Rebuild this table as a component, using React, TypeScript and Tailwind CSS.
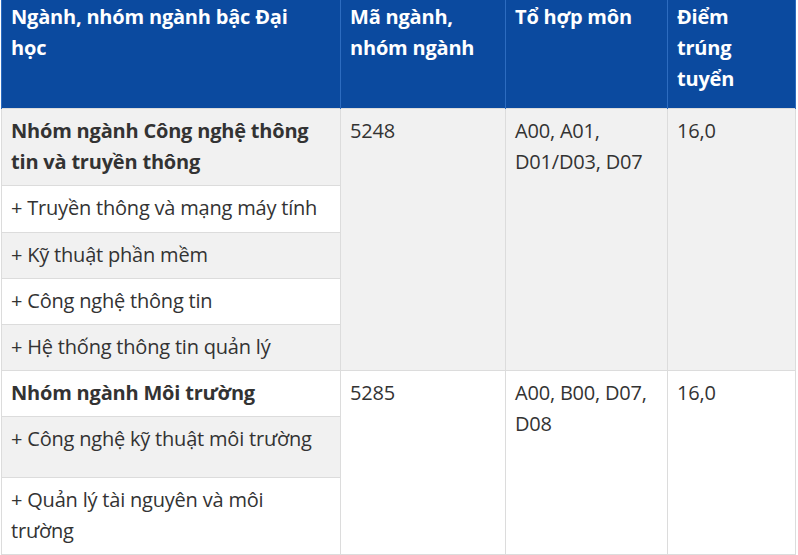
export default function App() {
  const cell = 'border border-[#dcdcdc] px-[9px] pt-[6px] pb-[7px] align-top';
  const head = 'border-x border-[#2d6cc0] px-[9px] pt-[1px] align-top text-left font-bold';
  return (
    <div className="w-[798px] h-[555px] bg-white overflow-hidden font-['Open_Sans',sans-serif] text-[20px] leading-[31px] text-[#333] tracking-[-0.2px]">
      <table className="table-fixed border-collapse w-[794px] ml-px">
        <colgroup>
          <col className="w-[339px]" />
          <col className="w-[165px]" />
          <col className="w-[162px]" />
          <col className="w-[128px]" />
        </colgroup>
        <thead>
          <tr className="h-[108px] bg-[#0b4a9f] text-white">
            <th className={head + ' pr-[40px]'}>Ngành, nhóm ngành bậc Đại học</th>
            <th className={head}>Mã ngành, nhóm ngành</th>
            <th className={head}>Tổ hợp môn</th>
            <th className={head}>Điểm trúng tuyển</th>
          </tr>
        </thead>
        <tbody>
          <tr className="h-[77px] bg-[#f1f1f1]">
            <td className={cell + ' font-bold'}>Nhóm ngành Công nghệ thông tin và truyền thông</td>
            <td className={cell} rowSpan={5}>5248</td>
            <td className={cell} rowSpan={5}>A00, A01, D01/D03, D07</td>
            <td className={cell} rowSpan={5}>16,0</td>
          </tr>
          <tr className="h-[47px] bg-white">
            <td className={cell}>+ Truyền thông và mạng máy tính</td>
          </tr>
          <tr className="h-[46px] bg-[#f1f1f1]">
            <td className={cell}>+ Kỹ thuật phần mềm</td>
          </tr>
          <tr className="h-[46px] bg-white">
            <td className={cell}>+ Công nghệ thông tin</td>
          </tr>
          <tr className="h-[46px] bg-[#f1f1f1]">
            <td className={cell}>+ Hệ thống thông tin quản lý</td>
          </tr>
          <tr className="h-[46px] bg-white">
            <td className={cell + ' font-bold'}>Nhóm ngành Môi trường</td>
            <td className={cell} rowSpan={3}>5285</td>
            <td className={cell} rowSpan={3}>A00, B00, D07, D08</td>
            <td className={cell} rowSpan={3}>16,0</td>
          </tr>
          <tr className="h-[61px] bg-[#f1f1f1]">
            <td className={cell}>+ Công nghệ kỹ thuật môi trường</td>
          </tr>
          <tr className="h-[77px] bg-white">
            <td className={cell}>+ Quản lý tài nguyên và môi trường</td>
          </tr>
        </tbody>
      </table>
    </div>
  );
}
